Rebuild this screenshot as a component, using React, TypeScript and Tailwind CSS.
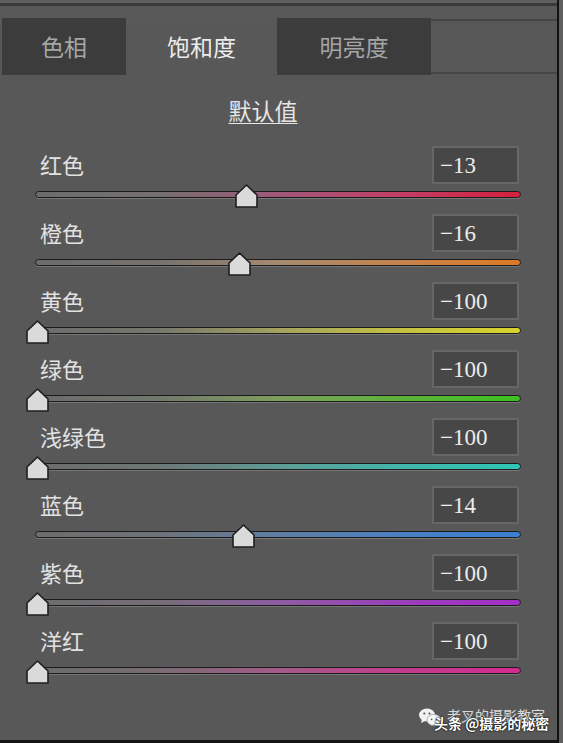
import React from "react";

const rows = [
  { label: "红色", value: -13, track: "bg-[linear-gradient(90deg,#6c6c6c_0%,#757070_25%,#a0587a_50%,#c23f66_75%,#d61f3d_100%)]" },
  { label: "橙色", value: -16, track: "bg-[linear-gradient(90deg,#6c6c6c_0%,#75716e_25%,#a58a70_50%,#c6834c_75%,#db7a26_100%)]" },
  { label: "黄色", value: -100, track: "bg-[linear-gradient(90deg,#6c6c6c_0%,#76766c_25%,#a3a260_50%,#c3c044_75%,#d8d42c_100%)]" },
  { label: "绿色", value: -100, track: "bg-[linear-gradient(90deg,#6c6c6c_0%,#72786c_25%,#7e9e5c_50%,#5db23c_75%,#3ec120_100%)]" },
  { label: "浅绿色", value: -100, track: "bg-[linear-gradient(90deg,#6c6c6c_0%,#6e7676_25%,#5e9c96_50%,#43b5aa_75%,#2ec6b6_100%)]" },
  { label: "蓝色", value: -14, track: "bg-[linear-gradient(90deg,#6c6c6c_0%,#6e7278_25%,#5f7ea2_50%,#4a80c2_75%,#3a7fd2_100%)]" },
  { label: "紫色", value: -100, track: "bg-[linear-gradient(90deg,#6c6c6c_0%,#756e78_25%,#8e5ca2_50%,#9a40ba_75%,#a42ec6_100%)]" },
  { label: "洋红", value: -100, track: "bg-[linear-gradient(90deg,#6c6c6c_0%,#786c72_25%,#a45a88_50%,#c03e8c_75%,#d42a90_100%)]" },
];

function Thumb({ value }: { value: number }) {
  // 0 sits at the middle of the track, -100 at its left end
  const left = 2 + (value + 100) * 2.4 - 11;
  return (
    <svg
      className="absolute top-[-7px]"
      style={{ left }}
      width="23"
      height="24"
      viewBox="0 0 23 24"
    >
      <path
        d="M11.5 1 L22 11 L22 23 L1 23 L1 11 Z"
        fill="#dadada"
        stroke="#1e1e1e"
        strokeWidth="1.6"
        strokeLinejoin="round"
      />
    </svg>
  );
}

function SliderRow({ label, value, track }: { label: string; value: number; track: string }) {
  return (
    <div className="h-[68px] ml-[35px] w-[486px]">
      <div className="h-[46px] pt-[4px] flex items-center justify-between">
        <span className="pl-[5px] mt-[-3px] text-[22px] leading-none text-[#e2e2e2]">{label}</span>
        <div className="w-[87px] h-[38px] mr-[2px] bg-[#474747] border-2 border-[#666] flex items-center pl-[6px]">
          <span className="text-[23px] leading-none text-[#ececec] font-['Liberation_Serif',serif]">
            {value < 0 ? "−" + Math.abs(value) : value}
          </span>
        </div>
      </div>
      <div className="relative mt-[5px]">
        <div className={`h-[7px] rounded-full border border-[#1c1c1c] shadow-[0_1px_0_#767676] ${track}`} />
        <Thumb value={value} />
      </div>
    </div>
  );
}

function Tab({ label, active, width }: { label: string; active?: boolean; width: string }) {
  return (
    <div
      className={`${width} h-full flex items-center justify-center text-[23px] leading-none ${
        active ? "bg-[#585858] text-[#ececec]" : "bg-[#3c3c3c] text-[#a6a6a6]"
      }`}
    >
      {label}
    </div>
  );
}

function WeChatIcon() {
  return (
    <svg width="24" height="20" viewBox="0 0 24 20">
      <ellipse cx="9" cy="8" rx="8" ry="6.5" fill="#f2f2f2" />
      <path d="M4 12 L3 16 L8 13.5 Z" fill="#f2f2f2" />
      <ellipse cx="16" cy="13" rx="7" ry="5.6" fill="#f7f7f7" stroke="#9a9a9a" strokeWidth="0.8" />
      <circle cx="6.3" cy="6.5" r="1.1" fill="#555" />
      <circle cx="11.5" cy="6.5" r="1.1" fill="#555" />
      <circle cx="13.6" cy="12.3" r="0.9" fill="#555" />
      <circle cx="18.4" cy="12.3" r="0.9" fill="#555" />
    </svg>
  );
}

export default function App() {
  return (
    <div className="w-[563px] h-[743px] flex bg-[#585858] overflow-hidden font-['Noto_Sans_CJK_SC','Noto_Sans',sans-serif]">
      <div className="w-[557px] h-full flex flex-col relative">
        <div className="h-[3px] bg-[#5e5e5e]" />
        <div className="h-[3px] bg-[#3a3a3a]" />
        <div className="h-[12px] bg-[#595959]" />

        <div className="h-[57px] flex pl-[2px]">
          <Tab label="色相" width="w-[124px]" />
          <Tab label="饱和度" width="w-[151px]" active />
          <Tab label="明亮度" width="w-[154px]" />
          <div className="flex-1 mt-[1px] h-[55px] border-y-2 border-[#464646] bg-[#575757]" />
        </div>

        <div className="h-[65px] w-[526px] flex justify-center pt-[24px]">
          <span className="text-[23px] leading-none text-[#e6e6e6] underline underline-offset-[3px] decoration-1">
            默认值
          </span>
        </div>

        {rows.map((r) => (
          <SliderRow key={r.label} {...r} />
        ))}

        <div className="flex-1" />
        <div className="h-[3px] bg-[#151515]" />

        <div className="absolute left-[418px] top-[705px] w-[140px] h-[34px]">
          <div className="absolute left-0 top-[2px]">
            <WeChatIcon />
          </div>
          <span className="absolute left-[29px] top-[3px] text-[14px] leading-none text-[#d8d8d8] whitespace-nowrap">
            老叉的摄影教室
          </span>
          <span className="absolute left-[16px] top-[11px] text-[14px] leading-none font-bold text-white whitespace-nowrap [text-shadow:0_0_2px_#000,0_0_1px_#000]">
            头条 @摄影的秘密
          </span>
        </div>
      </div>
      <div className="w-[2px] h-full bg-[#121212]" />
      <div className="flex-1 h-full bg-[#5f5f5f]" />
    </div>
  );
}
